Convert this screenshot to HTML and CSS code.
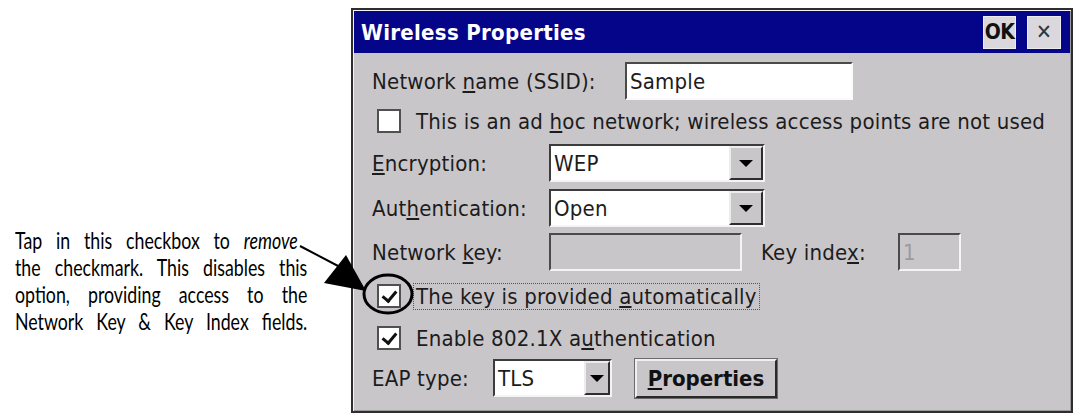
FILE: index.html
```html
<!DOCTYPE html>
<html lang="en">
<head>
    <meta charset="UTF-8">
    <title>Wireless Properties</title>
    <link rel="stylesheet" href="styles.css">
</head>
<body>
<div class="page">
    <div class="note">
        <p class="note-text">
            <span class="line first">Tap in this checkbox to <em>remove</em></span>
            <span class="line">the checkmark. This disables this</span>
            <span class="line">option, providing access to the</span>
            <span class="line">Network Key &amp; Key Index fields.</span>
        </p>
    </div>

    <div class="dialog">
        <div class="titlebar">
            <span class="title">Wireless Properties</span>
            <div class="title-btns">
                <button class="tb-btn ok">OK</button>
                <button class="tb-btn close">&#x2715;</button>
            </div>
        </div>

        <div class="content">
            <div class="row r-ssid">
                <span class="label w-ssid">Network <u>n</u>ame (SSID):</span>
                <div class="field ssid">Sample</div>
            </div>
            <div class="row r-adhoc">
                <span class="check"></span>
                <span class="check-text">This is an ad <u>h</u>oc network; wireless access points are not used</span>
            </div>
            <div class="row r-enc">
                <span class="label w-mid"><u>E</u>ncryption:</span>
                <div class="combo wide">
                    <span class="combo-value">WEP</span>
                    <span class="combo-btn"><span class="arrow"></span></span>
                </div>
            </div>
            <div class="row r-auth">
                <span class="label w-mid">Aut<u>h</u>entication:</span>
                <div class="combo wide">
                    <span class="combo-value">Open</span>
                    <span class="combo-btn"><span class="arrow"></span></span>
                </div>
            </div>
            <div class="row r-key">
                <span class="label w-mid">Network <u>k</u>ey:</span>
                <div class="field netkey disabled"></div>
                <span class="label keyidx-label">Key inde<u>x</u>:</span>
                <div class="field keyidx disabled">1</div>
            </div>
            <div class="row r-auto">
                <span class="check checked"></span>
                <span class="check-text focused">The key is provided <u>a</u>utomatically</span>
            </div>
            <div class="row r-8021x">
                <span class="check checked"></span>
                <span class="check-text">Enable 802.1X a<u>u</u>thentication</span>
            </div>
            <div class="row r-eap">
                <span class="label w-eap">EAP type:</span>
                <div class="combo narrow">
                    <span class="combo-value">TLS</span>
                    <span class="combo-btn small"><span class="arrow"></span></span>
                </div>
                <button class="push-btn"><u>P</u>roperties</button>
            </div>
        </div>
    </div>

    <!-- callout ring and pointer over the checkbox -->
    <svg class="callout" width="1076" height="415" viewBox="0 0 1076 415">
        <line x1="300" y1="246" x2="340" y2="267" stroke="#000" stroke-width="2"/>
        <polygon points="366,291 324,283 346,255" fill="#000"/>
        <ellipse cx="388" cy="294" rx="24" ry="19" fill="none" stroke="#000" stroke-width="3"/>
    </svg>
</div>
</body>
</html>
```

FILE: styles.css
```css
* {
    box-sizing: border-box;
}
body {
    margin: 0;
    background: #fff;
}
.page {
    position: relative;
    width: 1076px;
    height: 415px;
    display: flex;
    align-items: flex-start;
    padding-top: 8px;
}

/* side note: narrow lettering, squeezed horizontally */
.note {
    flex: none;
    width: 292px;
    margin: 218px 44px 0 15px;
}
.note-text {
    width: 395px;
    margin: 0;
    transform: scaleX(0.74);
    transform-origin: left top;
    font-family: Lato, "DejaVu Sans", sans-serif;
    font-size: 24px;
    line-height: 27px;
    color: #000;
}
.note-text .line {
    display: block;
    text-align: justify;
    text-align-last: justify;
}
.note-text .line.first {
    width: 382px;
}
.note-text em {
    font-style: italic;
}

/* dialog frame */
.dialog {
    flex: none;
    width: 722px;
    height: 405px;
    border: 2px solid #2e2e2e;
    padding: 1px;
    background: #c9c6ca;
    box-shadow: inset 1px 1px 0 #f2f2f2, inset -1px -1px 0 #9a9a9a;
    font-family: "DejaVu Sans", sans-serif;
    font-stretch: condensed;
    font-size: 22px;
    letter-spacing: 0.2px;
    color: #1c1c1c;
    white-space: nowrap;
}
.titlebar {
    height: 42px;
    background: #05058a;
    display: flex;
    align-items: center;
    justify-content: space-between;
    padding: 0 9px 0 7px;
}
.title {
    color: #fff;
    font-weight: bold;
    font-size: 22px;
    letter-spacing: 0.3px;
}
.title-btns {
    display: flex;
    gap: 11px;
}
.tb-btn {
    width: 33px;
    height: 33px;
    padding: 0;
    border: 1px solid #ececec;
    background: #dad8dc;
    font-family: "DejaVu Sans", sans-serif;
    font-stretch: condensed;
    color: #111;
}
.tb-btn.ok {
    font-weight: bold;
    font-size: 21px;
    letter-spacing: -0.5px;
}
.tb-btn.close {
    width: 34px;
    font-size: 21px;
    color: #333;
}

/* rows */
.content {
    padding: 7px 18px 0 18px;
}
.row {
    display: flex;
    align-items: center;
}
.r-ssid { height: 42px; }
.r-adhoc { height: 38px; }
.r-enc { height: 46px; }
.r-auth { height: 44px; }
.r-key { height: 44px; }
.r-auto { height: 44px; }
.r-8021x { height: 40px; }
.r-eap { height: 40px; }

.label {
    flex: none;
}
.w-ssid { width: 253px; }
.w-mid { width: 177px; }
.w-eap { width: 121px; }
.keyidx-label {
    margin-left: 19px;
    width: 137px;
}

/* sunken edit fields */
.field {
    flex: none;
    height: 38px;
    background: #fff;
    border: 2px solid;
    border-color: #4a4a4a #fafafa #fafafa #4a4a4a;
    padding: 3px 3px 0;
    line-height: 30px;
}
.field.ssid { width: 228px; }
.field.disabled {
    background: #c9c6ca;
    border-color: #4a4a4a #f4f4f4 #f4f4f4 #4a4a4a;
}
.field.netkey { width: 193px; }
.field.keyidx {
    width: 63px;
    color: #9c9a9e;
}

/* combo boxes */
.combo {
    flex: none;
    height: 38px;
    display: flex;
    background: #fff;
    border: 2px solid;
    border-color: #3c3c3c #f4f4f4 #f4f4f4 #3c3c3c;
}
.combo.wide { width: 216px; }
.combo.narrow { width: 119px; }
.combo-value {
    flex: 1;
    padding: 3px 3px 0;
    line-height: 30px;
}
.combo-btn {
    width: 34px;
    background: #c9c6ca;
    border: 2px solid;
    border-color: #ececec #2e2e2e #2e2e2e #ececec;
    display: flex;
    align-items: center;
    justify-content: center;
}
.combo-btn.small { width: 26px; }
.arrow {
    width: 0;
    height: 0;
    border-left: 7px solid transparent;
    border-right: 7px solid transparent;
    border-top: 7px solid #000;
}

/* checkboxes */
.check {
    flex: none;
    width: 24px;
    height: 24px;
    margin-left: 5px;
    background: #fff;
    border: 2px solid #505050;
    position: relative;
}
.check.checked::after {
    content: "";
    position: absolute;
    left: 6px;
    top: 2px;
    width: 6px;
    height: 11px;
    border: solid #111;
    border-width: 0 3px 3px 0;
    transform: rotate(40deg);
}
.check-text {
    margin-left: 12px;
    padding: 0 2px;
    border: 1px dotted transparent;
}
.check-text.focused {
    border-color: #555;
}

.push-btn {
    margin-left: 23px;
    width: 142px;
    height: 39px;
    padding: 0;
    background: #c9c6ca;
    border: 2px solid;
    border-color: #f0f0f0 #2a2a2a #2a2a2a #f0f0f0;
    outline: 1px solid #6a6a6a;
    font-family: "DejaVu Sans", sans-serif;
    font-stretch: condensed;
    font-size: 22px;
    font-weight: bold;
    color: #111;
}

.callout {
    position: absolute;
    left: 0;
    top: 0;
    pointer-events: none;
}
```
